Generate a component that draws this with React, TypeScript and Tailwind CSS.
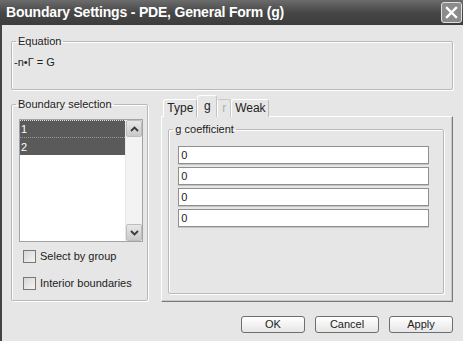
import React from 'react';

const font = { fontFamily: '"Liberation Sans", Arial, sans-serif' };

const Fieldset = ({
  label,
  className,
  children,
}: {
  label: string;
  className: string;
  children: React.ReactNode;
}) => (
  <fieldset
    className={`border border-[#b9b9b9] shadow-[inset_1px_1px_0_#ffffff,1px_1px_0_#ffffff] rounded-[2px] ${className}`}
  >
    <legend className="ml-[4px] px-[2px] text-[11px] leading-[13px] text-[#222]">{label}</legend>
    {children}
  </fieldset>
);

const Checkbox = ({ label }: { label: string }) => (
  <div className="flex items-center gap-[4px] h-[13px]">
    <div className="w-[13px] h-[13px] border border-[#777] bg-gradient-to-br from-[#d6d6d6] to-[#f4f4f4]" />
    <span className="text-[11px] leading-[13px] text-[#222]">{label}</span>
  </div>
);

const Button = ({ label }: { label: string }) => (
  <button className="w-[64px] h-[17px] rounded-[3px] border border-[#6e6e6e] bg-gradient-to-b from-[#ffffff] to-[#e6e6e6] text-[11px] leading-[15px] text-[#222]">
    {label}
  </button>
);

const tabs = [
  { name: 'Type', state: 'normal', w: 'w-[34px]' },
  { name: 'g', state: 'active', w: 'w-[20px]' },
  { name: 'r', state: 'disabled', w: 'w-[14px]' },
  { name: 'Weak', state: 'normal', w: 'w-[38px]' },
];

export default function App() {
  return (
    <div className="w-[463px] h-[341px] bg-[#e6e6e6] border-l-2 border-[#444] flex flex-col" style={font}>
      {/* title bar */}
      <div className="h-[25px] shrink-0 -ml-[2px] flex items-center justify-between pl-[6px] pr-[1px] bg-gradient-to-b from-[#6c6c6c] via-[#474747] to-[#3c3c3c]">
        <span className="text-white font-bold text-[14px] tracking-[-0.2px]">
          Boundary Settings - PDE, General Form (g)
        </span>
        <div className="w-[21px] h-[21px] rounded-[3px] border border-[#e0e0e0] bg-[#8b8b8b] flex items-center justify-center">
          <svg width="13" height="13" viewBox="0 0 13 13">
            <path d="M2 2 L11 11 M11 2 L2 11" stroke="#ffffff" strokeWidth="2.4" strokeLinecap="square" />
          </svg>
        </div>
      </div>

      <div className="flex flex-col pl-[9px] pr-[10px]">
        <Fieldset label="Equation" className="mt-[10px] h-[55px]">
          <div className="mt-[8px] pl-[2px] text-[11px] leading-[13px] text-[#222]">-n•Γ = G</div>
        </Fieldset>

        <div className="flex mt-[6px] gap-[13px]">
          {/* boundary selection */}
          <Fieldset label="Boundary selection" className="mt-[2px] w-[138px] h-[203px] flex flex-col">
            <div className="mt-[8px] ml-[7px] mr-[4px] h-[123px] border border-[#a3a3a3] bg-white flex">
              <div className="flex-1 flex flex-col">
                <div className="h-[17px] bg-[#5a5a5a] text-white text-[11px] leading-[16px] pl-[1px] border-t border-dotted border-[#e0e0e0]">
                  1
                </div>
                <div className="h-[18px] bg-[#5a5a5a] text-white text-[11px] leading-[18px] pl-[1px] border-t border-dotted border-[#9a9a9a]">
                  2
                </div>
              </div>
              <div className="w-[17px] bg-[#f3f3f3] border-l border-[#e8e8e8] flex flex-col justify-between">
                <div className="h-[17px] bg-gradient-to-b from-[#e8e8e8] to-[#c9c9c9] border border-[#bdbdbd] rounded-[2px] flex items-center justify-center">
                  <svg width="9" height="6" viewBox="0 0 9 6">
                    <path d="M1 5 L4.5 1.5 L8 5" stroke="#3a3a3a" strokeWidth="1.8" fill="none" />
                  </svg>
                </div>
                <div className="h-[17px] bg-gradient-to-b from-[#e8e8e8] to-[#c9c9c9] border border-[#bdbdbd] rounded-[2px] flex items-center justify-center">
                  <svg width="9" height="6" viewBox="0 0 9 6">
                    <path d="M1 1 L4.5 4.5 L8 1" stroke="#3a3a3a" strokeWidth="1.8" fill="none" />
                  </svg>
                </div>
              </div>
            </div>
            <div className="ml-[11px] mt-[8px] flex flex-col gap-[14px]">
              <Checkbox label="Select by group" />
              <Checkbox label="Interior boundaries" />
            </div>
          </Fieldset>

          {/* tabs */}
          <div className="w-[293px] flex flex-col">
            <div className="flex items-end h-[21px] pl-[2px] relative z-10 -mb-[1px]">
              {tabs.map((t) => (
                <div
                  key={t.name}
                  className={`${t.w} flex justify-center text-[12px] border border-b-0 rounded-t-[3px] ${
                    t.state === 'active'
                      ? 'h-[22px] bg-[#e6e6e6] border-[#c3c3c3] border-t-white border-l-white text-[#222] leading-[20px]'
                      : t.state === 'disabled'
                      ? 'h-[18px] bg-[#e6e6e6] border-[#c8c8c8] border-l-white text-[#b0b0b0] leading-[17px]'
                      : 'h-[18px] bg-[#e6e6e6] border-[#bdbdbd] border-t-white border-l-white text-[#222] leading-[17px]'
                  }`}
                >
                  {t.name}
                </div>
              ))}
            </div>
            <div className="h-[186px] border border-white border-r-[#7a7a7a] border-b-[#7a7a7a] shadow-[inset_-1px_-1px_0_#c8c8c8] flex flex-col">
              <Fieldset label="g coefficient" className="mt-[6px] ml-[6px] mr-[8px] h-[171px] flex flex-col">
                <div className="mt-[10px] ml-[9px] mr-[14px] flex flex-col gap-[3px]">
                  {[0, 1, 2, 3].map((i) => (
                    <div
                      key={i}
                      className="h-[18px] bg-white border border-[#8f8f8f] shadow-[0_1px_0_#c4c4c4] text-[11px] leading-[16px] pl-[2px] text-[#222]"
                    >
                      0
                    </div>
                  ))}
                </div>
              </Fieldset>
            </div>
          </div>
        </div>

        <div className="flex justify-end gap-[10px] mt-[14px] pr-[0px]">
          <Button label="OK" />
          <Button label="Cancel" />
          <Button label="Apply" />
        </div>
      </div>
    </div>
  );
}
